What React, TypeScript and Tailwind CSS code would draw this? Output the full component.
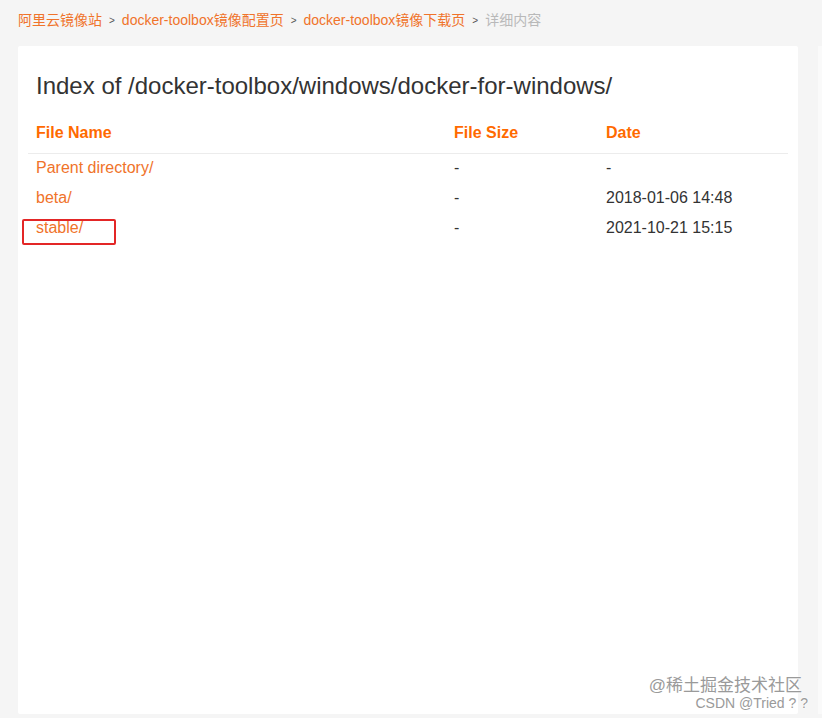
import React from 'react';

const crumbs = [
  { label: '阿里云镜像站', link: true },
  { label: 'docker-toolbox镜像配置页', link: true },
  { label: 'docker-toolbox镜像下载页', link: true },
  { label: '详细内容', link: false },
];

const rows = [
  { name: 'Parent directory/', size: '-', date: '-' },
  { name: 'beta/', size: '-', date: '2018-01-06 14:48' },
  { name: 'stable/', size: '-', date: '2021-10-21 15:15', marked: true },
];

function Breadcrumb() {
  return (
    <div className="flex items-center h-[41px] pl-[18px] text-[14px]">
      {crumbs.map((c, i) => (
        <React.Fragment key={i}>
          <span className={c.link ? 'text-[#f0732a]' : 'text-[#b9b9b9]'}>{c.label}</span>
          {i < crumbs.length - 1 && <span className="text-[#555] text-[10px] mx-[7px]">&gt;</span>}
        </React.Fragment>
      ))}
    </div>
  );
}

function FileTable() {
  return (
    <table className="w-full border-collapse">
      <thead>
        <tr className="border-b border-[#ececec]">
          <th className="w-[418px] h-[40px] pl-2 text-left text-[16px] font-bold text-[#ff6a00]">File Name</th>
          <th className="w-[152px] pl-2 text-left text-[16px] font-bold text-[#ff6a00]">File Size</th>
          <th className="pl-2 text-left text-[16px] font-bold text-[#ff6a00]">Date</th>
        </tr>
      </thead>
      <tbody>
        {rows.map((r) => (
          <tr key={r.name} className="h-[30px] text-[16px]">
            <td className="pl-2 text-[#f0732a] relative">
              {r.marked && (
                <div className="absolute left-[-6px] top-[6px] w-[94px] h-[26px] border-2 border-[#e32626] rounded-[2px]" />
              )}
              {r.name}
            </td>
            <td className="pl-2 text-[#333]">{r.size}</td>
            <td className="pl-2 text-[#333]">{r.date}</td>
          </tr>
        ))}
      </tbody>
    </table>
  );
}

export default function App() {
  return (
    <div
      className="w-[822px] h-[718px] bg-[#f5f5f5] overflow-hidden relative"
      style={{ fontFamily: '"Liberation Sans", Arial, "Noto Sans CJK SC", sans-serif' }}
    >
      <Breadcrumb />
      <div className="flex gap-[20px] pl-[18px] pt-[5px]">
        <div className="w-[780px] h-[668px] bg-white rounded-[2px] pt-[21px] px-[10px]">
          <h1 className="pl-2 text-[24px] text-[#333] leading-[38px] mb-[8px]">
            Index of /docker-toolbox/windows/docker-for-windows/
          </h1>
          <FileTable />
        </div>
        <div className="flex-1 h-[668px] bg-[#fafafa]" />
      </div>
      <div
        className="absolute right-[20px] bottom-[8px] text-right text-[#9a9a9a] leading-none"
        style={{ textShadow: '0 0 2px #fff, 0 0 2px #fff' }}
      >
        <div className="text-[17px] mb-[2px]">@稀土掘金技术社区</div>
        <div className="text-[14px] mr-[-6px]">CSDN @Tried ? ?</div>
      </div>
    </div>
  );
}
